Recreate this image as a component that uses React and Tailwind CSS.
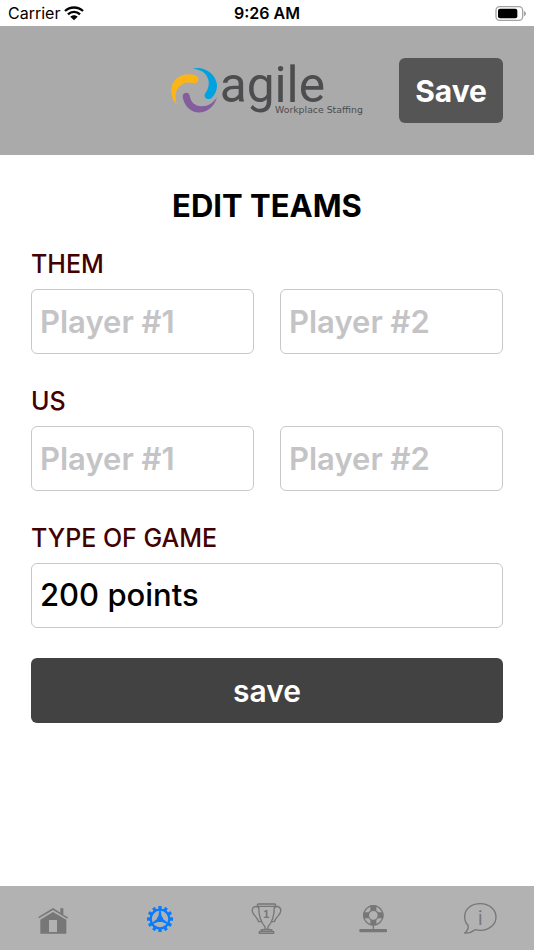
import { useState } from 'react';

const gearTeeth = [0, 30, 60, 90, 120, 150, 180, 210, 240, 270, 300, 330];

const Logo = () => (
    <svg viewBox="27 36 588 168" className="w-[196px] h-14 overflow-visible" role="img" aria-label="agile Workplace Staffing">
        <path fill="#fdb515" d="M50 161C27 135 28 92 58 77C74 69 92 68 106 73C120 79 117 97 103 97C92 94 80 92 69 99C47 110 43 132 50 161Z" />
        <path fill="#00a3e0" d="M98 53C130 44 166 66 171 100C172 118 164 132 156 140C146 150 129 140 135 128C143 118 148 105 146 91C143 70 128 56 98 53Z" />
        <path fill="#835d9c" d="M171 138C162 175 128 191 102 182C82 175 70 155 68 136C68 124 86 120 89 134C92 148 98 161 118 165C138 168 158 160 171 138Z" />
        <text x="179" y="152" fontSize="149" fill="#4d4d4f" className="font-[Roboto,sans-serif]">agile</text>
        <text x="345" y="185" fontSize="28" fill="#4d4d4f" className="font-['DejaVu_Sans',sans-serif]">Workplace Staffing</text>
    </svg>
);

const HomeIcon = () => (
    <svg viewBox="0 0 120 120" className="size-10" fill="currentColor">
        <path d="M16 57L60 30L82 44V31H91V50L105 58L103 62L60 36L18 61Z" />
        <path fillRule="evenodd" d="M22 65L60 42L100 65V107H22ZM48 66V102H72V66Z" />
    </svg>
);

const GearIcon = () => (
    <svg viewBox="0 0 120 120" className="size-10" fill="currentColor">
        {gearTeeth.map((angle) => (
            <rect key={angle} x="55" y="24" width="10" height="12" rx="1" transform={`rotate(${angle} 60 63)`} />
        ))}
        <circle cx="60" cy="63" r="28" fill="none" stroke="currentColor" strokeWidth="7" />
        <circle cx="60" cy="63" r="9" />
        <path d="M58 36H62L66 62H54Z" />
        <path d="M58 36H62L66 62H54Z" transform="rotate(120 60 63)" />
        <path d="M58 36H62L66 62H54Z" transform="rotate(240 60 63)" />
        <path d="M60 58L72 72H48Z" />
    </svg>
);

const TrophyIcon = () => (
    <svg viewBox="0 0 120 120" className="size-10" fill="none" stroke="currentColor" strokeWidth="4" strokeLinejoin="round" strokeLinecap="round">
        <rect x="31" y="18" width="55" height="7" rx="3" />
        <path d="M35 25C35 58 42 74 54 86V94H63V86C75 74 82 58 82 25" />
        <path d="M34 28C24 22 14 28 16 40C18 52 30 56 35 71L41 71" />
        <path d="M83 28C93 22 103 28 101 40C99 52 87 56 82 71L76 71" />
        <path d="M42 96C44 94 73 94 75 96V100H42ZM37 101H80V106H37Z" />
        <text x="58" y="61" textAnchor="middle" fontSize="33" fill="currentColor" stroke="none" className="font-['Liberation_Sans',sans-serif] font-bold">1</text>
    </svg>
);

const LifeRingIcon = () => (
    <svg viewBox="0 0 120 120" className="size-10" fill="none" stroke="currentColor">
        <circle cx="58" cy="52" r="29" strokeWidth="4" />
        <circle cx="58" cy="52" r="15" strokeWidth="4" />
        <path strokeWidth="18" d="M58 22V38M58 66V82M28 52H44M72 52H88" />
        <path strokeWidth="4" d="M58 82V94" />
        <rect x="16" y="93" width="83" height="10" rx="3" fill="currentColor" stroke="none" />
    </svg>
);

const InfoIcon = () => (
    <svg viewBox="0 0 120 120" className="size-10" fill="none" stroke="currentColor" strokeWidth="4" strokeLinejoin="round">
        <path d="M21 82C14 75 11 66 11 56C11 33 31 17 58 17C84 17 105 34 105 57C105 80 84 97 58 97C52 97 47 96 42 95C32 103 22 106 11 105C19 99 23 92 21 82Z" />
        <text x="58" y="80" textAnchor="middle" fontSize="56" fill="currentColor" stroke="none" className="font-[Inter,sans-serif]">i</text>
    </svg>
);

const tabs = [
    { name: 'Home', icon: HomeIcon },
    { name: 'Settings', icon: GearIcon },
    { name: 'Scores', icon: TrophyIcon },
    { name: 'Help', icon: LifeRingIcon },
    { name: 'Info', icon: InfoIcon },
];

const StatusBar = () => (
    <div className="grid grid-cols-3 items-center h-[26px] px-2 text-base leading-6">
        <div className="flex items-center gap-1">
            <span>Carrier</span>
            <svg viewBox="0 0 60 45" className="w-5 h-[15px]" fill="none" stroke="currentColor" strokeWidth="7">
                <path d="M3 15C18 1 42 1 57 15" />
                <path d="M12 25C22 15 38 15 48 25" />
                <path fill="currentColor" stroke="none" d="M19 32C25 26 35 26 41 32L30 43Z" />
            </svg>
        </div>
        <span className="text-center font-semibold">9:26 AM</span>
        <svg viewBox="0 0 96 45" className="justify-self-end w-8 h-[15px]">
            <rect x="6" y="2" width="80" height="41" rx="11" fill="none" stroke="#a3a3a3" strokeWidth="4" />
            <rect x="12" y="8" width="58" height="29" rx="6" fill="#000" />
            <path fill="#a3a3a3" d="M90 15C98 19 98 27 90 30Z" />
        </svg>
    </div>
);

const PlayerFields = ({ title }) => (
    <fieldset className="mt-[31px] first-of-type:mt-6">
        <legend className="text-[25px] leading-8 font-medium text-[#430000]">{title}</legend>
        <div className="grid grid-cols-2 gap-[26px] mt-[9px]">
            {['Player #1', 'Player #2'].map((player) => (
                <input
                    key={player}
                    type="text"
                    placeholder={player}
                    aria-label={`${title} ${player}`}
                    className="w-full min-w-0 h-[65px] px-2 rounded-md border border-[#c8c8c8] text-[31px] font-semibold placeholder:text-[#c4c4c6]"
                />
            ))}
        </div>
    </fieldset>
);

const App = () => {
    const [gameType, setGameType] = useState('200');

    return (
        <div className="flex flex-col min-h-screen bg-white text-black font-[Inter,sans-serif]">
            <StatusBar />
            <header className="grid grid-cols-[1fr_auto_1fr] items-center px-[31px] py-8 bg-[#aaaaaa]">
                <div className="col-start-2">
                    <Logo />
                </div>
                <button type="submit" form="teams" className="justify-self-end h-[65px] px-4 pt-0.5 rounded-md bg-[#555555] text-white text-[30px] font-bold">
                    Save
                </button>
            </header>

            <main className="grow px-[31px] pt-[33px]">
                <h1 className="text-center text-[31px] leading-9 font-bold">EDIT TEAMS</h1>
                <form id="teams" onSubmit={(e) => e.preventDefault()}>
                    <PlayerFields title="THEM" />
                    <PlayerFields title="US" />
                    <label htmlFor="game-type" className="block mt-[31px] text-[25px] leading-8 font-medium text-[#430000]">
                        TYPE OF GAME
                    </label>
                    <select
                        id="game-type"
                        value={gameType}
                        onChange={(e) => setGameType(e.target.value)}
                        className="block appearance-none w-full h-[65px] mt-[9px] px-2 rounded-md border border-[#c8c8c8] bg-white text-[31px] font-medium"
                    >
                        <option value="200">200 points</option>
                    </select>
                    <button type="submit" className="w-full h-[65px] mt-[30px] pt-0.5 rounded-md bg-[#424242] text-white text-[30px] font-semibold">
                        save
                    </button>
                </form>
            </main>

            <nav className="grid grid-cols-5 h-16 bg-[#b2b2b2] text-[#777777]">
                {tabs.map(({ name, icon: Icon }) => (
                    <a
                        key={name}
                        href={`#${name.toLowerCase()}`}
                        aria-label={name}
                        className={name === 'Settings' ? 'flex items-center justify-center text-[#087cff]' : 'flex items-center justify-center'}
                    >
                        <Icon />
                    </a>
                ))}
            </nav>
        </div>
    );
};

export default App;
